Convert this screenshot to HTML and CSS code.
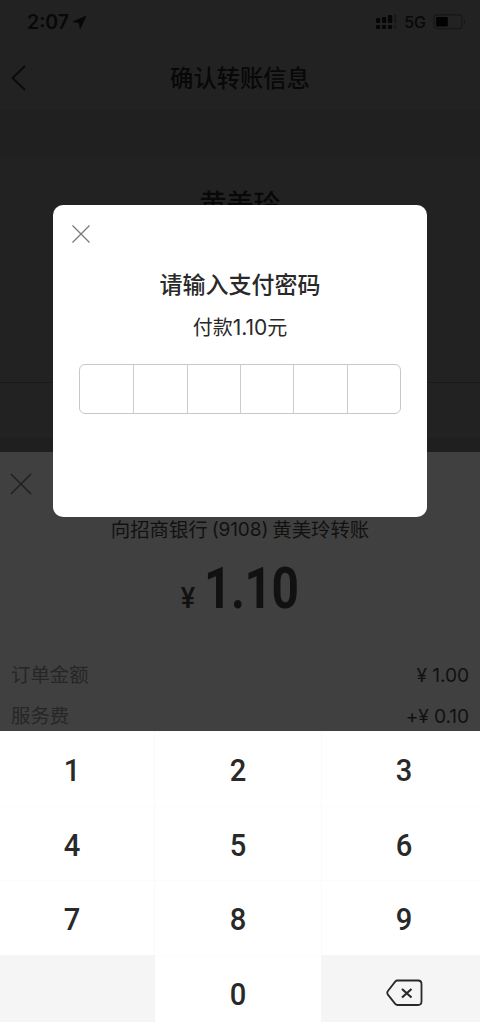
FILE: index.html
```html
<!DOCTYPE html>
<html lang="zh-CN">
<head>
<meta charset="utf-8">
<meta name="viewport" content="width=device-width">
<title>确认转账信息</title>
<link rel="stylesheet" href="styles.css">
</head>
<body>
<div class="screen">
  <div class="page">
    <div class="status">
      <div class="clock">
        <span class="time">2:07</span>
        <svg width="15" height="15" viewBox="0 0 15 15"><path d="M14 1 1 6.800l6.100.9 1.100 6z" fill="#070707" stroke="#070707" stroke-width=".6"/></svg>
      </div>
      <div class="indicators">
        <svg class="signal" width="23" height="16" viewBox="0 0 23 16">
          <g fill="#060606"><rect x="2" y="4" width="4.2" height="5" rx="1"/><rect x="8" y="3" width="4.2" height="6" rx="1"/><rect x="14" y="1" width="4.2" height="8" rx="1"/><rect x="2" y="11" width="4.2" height="4" rx="1"/><rect x="8" y="11" width="4.2" height="4" rx="1"/><rect x="14" y="11" width="4.2" height="4" rx="1"/></g>
          <g fill="#191919"><rect x="20" y="0" width="2.500" height="9" rx="1"/><rect x="20" y="11" width="2.500" height="4" rx="1"/></g>
        </svg>
        <span class="network">5G</span>
        <svg width="34" height="16" viewBox="0 0 34 16"><rect x="1" y=".8" width="28" height="14" rx="3.5" fill="none" stroke="#151515"/><rect x="3.2" y="3" width="11.6" height="9.6" rx="1.2" fill="#020202"/><path d="M31 5.5q2.3 2.3 0 4.6z" fill="#151515"/></svg>
      </div>
    </div>
    <div class="nav">
      <svg class="back" width="16" height="26" viewBox="0 0 16 26"><path d="M14 1 1.5 13 14 25" fill="none" stroke="#0a0a0a" stroke-width="1.8"/></svg>
      <h1 class="nav-title">确认转账信息</h1>
    </div>
    <div class="gap"></div>
    <div class="payee">黄美玲</div>
    <div class="field"></div>
  </div>

  <div class="sheet">
    <svg class="sheet-close" width="22" height="22" viewBox="0 0 22 22"><path d="m1 1 20 20M21 1 1 21" fill="none" stroke="#202020" stroke-width="1.6"/></svg>
    <div class="target"><span>向招商银行</span><span class="account">(9108)</span><span>黄美玲转账</span></div>
    <div class="amount"><span class="yen">¥</span><span class="figure">1.10</span></div>
    <div class="line"><span class="label">订单金额</span><span class="value">¥ 1.00</span></div>
    <div class="line"><span class="label">服务费</span><span class="value">+¥ 0.10</span></div>
  </div>

  <div class="keypad">
    <div class="key left"><span>1</span></div><div class="key"><span>2</span></div><div class="key right"><span>3</span></div>
    <div class="key left"><span>4</span></div><div class="key"><span>5</span></div><div class="key right"><span>6</span></div>
    <div class="key left"><span>7</span></div><div class="key"><span>8</span></div><div class="key right"><span>9</span></div>
    <div class="key left blank"></div><div class="key"><span>0</span></div>
    <div class="key right blank">
      <svg width="38" height="28" viewBox="0 0 38 28"><path d="M11.5 1.5H32q3.500 0 3.500 3.500V22.500q0 3.500-3.500 3.500H11.500q-1.400 0-2.300-1.100L1.900 15.600q-1.300-1.800 0-3.600L9.200 2.600q.9-1.100 2.300-1.100z" fill="none" stroke="#292929" stroke-width="1.8"/><path d="m16 10 9.500 8.500m0-8.500-9.500 8.500" fill="none" stroke="#292929" stroke-width="2.200"/></svg>
    </div>
  </div>

  <div class="dialog">
    <svg class="dialog-close" width="18" height="18" viewBox="0 0 18 18"><path d="m.5.5 17 17M17.500.5l-17 17" fill="none" stroke="#777" stroke-width="1.2"/></svg>
    <h2 class="dialog-title">请输入支付密码</h2>
    <p class="dialog-amount">付款<span class="sum">1.10</span>元</p>
    <div class="code"><i></i><i></i><i></i><i></i><i></i><i></i></div>
  </div>
</div>
</body>
</html>
```
FILE: styles.css
```css
* { box-sizing: border-box; margin: 0; padding: 0; }
body { font-family: Inter, "Noto Sans CJK SC", sans-serif; }
svg { display: block; flex: none; }
.screen { position: relative; width: 480px; height: 1022px; overflow: hidden; background: #222; }

.page { height: 452px; color: #080808; }
.status { display: flex; justify-content: space-between; height: 44px; padding: 0 13px 0 27px; align-items: center; }
.clock, .indicators { display: flex; align-items: center; }
.clock { gap: 3px; }
.time { font-size: 19.5px; font-weight: 600; line-height: 24px; }
.network { font-size: 16px; font-weight: 500; margin: 0 7px 0 7px; }
.nav { display: flex; align-items: center; height: 66px; padding-left: 11px; }
.back { margin-top: 2px; }
.nav-title { flex: 1; margin-right: 27px; padding-top: 3px; text-align: center; font-size: 23.3px; line-height: 34px; font-weight: 500; }
.gap { height: 46px; background: #202020; }
.payee { height: 227px; padding-top: 29px; text-align: center; font-size: 27px; line-height: 40px; font-weight: 500; border-bottom: 1px solid #1a1a1a; }
.field { height: 69px; background: linear-gradient(#222 0 55px, #1f1f1f 55px); }

.sheet { height: 279px; padding: 21px 11px 0 10px; background: #404040; color: #111; }
.sheet-close { margin-bottom: 21px; }
.target { display: flex; justify-content: center; padding-left: 1px; font-size: 19.4px; line-height: 28px; }
.account { margin: 0 4px; font-size: 19px; letter-spacing: -.1px; }
.amount { display: flex; justify-content: center; align-items: baseline; height: 76px; margin-bottom: 41px; padding-left: 9px; font-family: Roboto, sans-serif; }
.yen { margin-right: -1px; font-size: 30px; font-weight: 500; transform: scaleX(.9); }
.figure { font-size: 57px; font-weight: 700; line-height: 90px; letter-spacing: -.5px; transform: scaleX(.84); }
.line { display: flex; justify-content: space-between; height: 41px; padding-left: 1px; font-size: 19.4px; line-height: 28px; }
.label { color: #262626; }
.value { font-size: 19.2px; letter-spacing: -.1px; }

.keypad { display: grid; grid-template-columns: 155px 166px 159px; grid-template-rows: repeat(3, 74.67px) 67px; height: 291px; background: #fff; color: #292929; font: 500 32px/38px Roboto, sans-serif; }
.key { display: flex; justify-content: center; padding-top: 19px; border-top: 1px solid #fcfcfc; }
.key span { transform: scaleX(.91); }
.key.left { padding-right: 9px; border-right: 1px solid #fafafa; }
.key.right { padding-left: 7px; border-left: 1px solid #fafafa; }
.key.blank { background: #f5f5f5; border-color: #f5f5f5; padding-top: 23px; }

.dialog { position: absolute; left: 53px; top: 205px; width: 374px; height: 312px; padding: 20px 26px; border-radius: 10px; background: #fff; color: #292929; text-align: center; }
.dialog-close { margin-left: -7.5px; }
.dialog-title { margin-top: 25px; font-size: 23px; line-height: 34px; font-weight: 500; }
.dialog-amount { margin-top: 11px; font-size: 20px; line-height: 30px; }
.sum { font-size: 21px; }
.code { display: grid; grid-template-columns: repeat(6, 1fr); height: 50px; margin-top: 21px; border: 1px solid #c8c8c8; border-radius: 6px; }
.code i + i { border-left: 1px solid #ccc; }
```
